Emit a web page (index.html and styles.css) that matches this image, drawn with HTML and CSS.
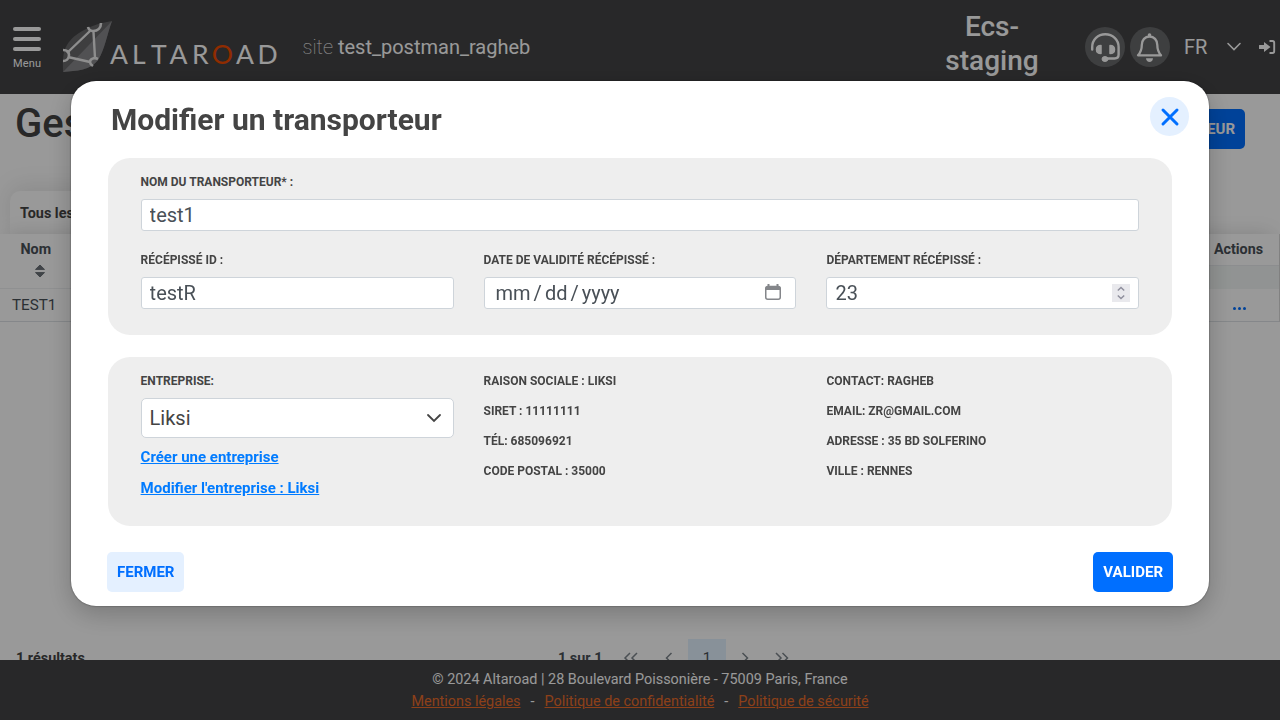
FILE: index.html
```html
<!DOCTYPE html>
<html lang="fr">
<head>
<meta charset="utf-8">
<title>Altaroad</title>
<link rel="stylesheet" href="styles.css">
</head>
<body>
<div class="app">
  <header class="header">
    <div class="menu"><i></i><i></i><i></i><span>Menu</span></div>
    <svg class="logo" width="218" height="54" viewBox="0 0 218 54">
      <path d="M50 1C30 4 12 13 5 25C0 33 1 43 1 52C14 51 29 50 36 40C43 29 45 14 50 1Z" fill="#68686a"/>
      <path d="M50 1L1 52C14 51 29 50 36 40C43 29 45 14 50 1Z" fill="#87878a"/>
      <path d="M28 11L5 33M31.500 12L33 38M6 37L28 42" fill="none" stroke="#ededed" stroke-width="2.4"/>
      <path d="M39 3C39 8 36 11 31 11Q27 11 26 7M1 30C5 30 7 32 7 35C7 39 4 41 1 41M36 39C32 37 28 39 28 42Q28 44 31 46" fill="none" stroke="#ededed" stroke-width="2.6"/>
      <text class="wordmark" x="48 70 89 107.500 130 149.700 174 195.500" y="43.500">ALTAR<tspan class="wordmark-o">O</tspan>AD</text>
    </svg>
    <div class="site"><span>site</span> test_postman_ragheb</div>
    <div class="env">Ecs-<br>staging</div>
    <div class="round">
      <svg width="40" height="40" viewBox="0 0 40 40" fill="none" stroke="#fff" stroke-width="2.4" stroke-linecap="round" stroke-linejoin="round"><path d="M7.2 22.5V20C7.2 12.500 13 7.200 20.300 7.200S33.600 12.500 33.600 20V27.500Q33.600 31.500 29.600 31.500H21"/><path d="M16 18.500V26.500C13.500 26.500 11.500 25 11.500 22.500S13.500 18.500 16 18.500ZM25 18.500V26.500C27.500 26.500 29.500 25 29.500 22.500S27.500 18.500 25 18.500Z" fill="#fff" stroke-width="1.500"/><ellipse cx="20" cy="32" rx="3" ry="2.500" fill="#fff" stroke-width="1"/></svg>
    </div>
    <div class="round">
      <svg width="40" height="40" viewBox="0 0 40 40"><path d="M8 28.300C11.500 24.500 11.800 22 11.800 18C11.800 13 15 9.500 19.500 9.500S27.300 13 27.300 18C27.300 22 27.600 24.500 31 28.300Z" fill="none" stroke="#fff" stroke-width="2.300" stroke-linejoin="round"/><circle cx="19.500" cy="8" r="1.800" fill="#fff"/><path d="M16 31.200H23Q22.500 35 19.500 35T16 31.200Z" fill="#fff"/></svg>
    </div>
    <div class="lang">FR</div>
    <svg class="chev" width="16" height="10" viewBox="0 0 16 10" fill="none" stroke="#fff" stroke-width="1.600" stroke-linecap="round"><path d="M2 1.500L8 7.500L14 1.500"/></svg>
    <svg class="exit" width="16" height="16" viewBox="0 0 16 16"><path d="M0 6.500Q0 6 .5 6H5V3L11.500 8L5 13V10H.5Q0 10 0 9.500Z" fill="#fff"/><path d="M10.500 2H13.500Q15.200 2 15.200 3.700V12.300Q15.200 14 13.500 14H10.500" fill="none" stroke="#fff" stroke-width="1.900"/></svg>
  </header>

  <main class="main">
    <div class="page-head"><h1>Gestion</h1><button class="create">CRÉER UN TRANSPORTEUR</button></div>
    <div class="tab">Tous les transporteurs</div>
    <div class="table">
      <div class="thead">
        <div class="th-name">Nom<svg width="10" height="14" viewBox="0 0 10 14"><path d="M5 1L9.500 5.400H.5ZM5 13L9.500 8.600H.5Z" fill="#6c7278" stroke="#6c7278" stroke-linejoin="round"/></svg></div>
        <div class="th-rest"><div class="th-actions">Actions</div><div class="filters"></div></div>
      </div>
      <div class="row"><span>TEST1</span><span class="dots"><i></i><i></i><i></i></span></div>
    </div>
    <div class="pager">
      <b class="results">1 résultats</b>
      <b class="count">1 sur 1</b>
      <svg class="pg" width="38" height="38" viewBox="0 0 38 38"><path d="M18 14L13 19L18 24M25 14L20 19L25 24"/></svg>
      <svg class="pg" width="38" height="38" viewBox="0 0 38 38"><path d="M21.500 14L16.500 19L21.500 24"/></svg>
      <span class="current">1</span>
      <svg class="pg" width="38" height="38" viewBox="0 0 38 38"><path d="M16.500 14L21.500 19L16.500 24"/></svg>
      <svg class="pg" width="38" height="38" viewBox="0 0 38 38"><path d="M12 14L17 19L12 24M18.500 14L23.500 19L18.500 24"/></svg>
    </div>
  </main>

  <footer class="footer">
    <div>© 2024 Altaroad | 28 Boulevard Poissonière - 75009 Paris, France</div>
    <div class="legal"><a>Mentions légales</a><span>-</span><a>Politique de confidentialité</a><span>-</span><a>Politique de sécurité</a></div>
  </footer>
</div>

<div class="overlay">
  <section class="modal">
    <div class="modal-head">
      <h2>Modifier un transporteur</h2>
      <button class="close"><svg width="18" height="18" viewBox="0 0 18 18" stroke="#006fff" stroke-width="3" stroke-linecap="round"><path d="M2 2L16 16M16 2L2 16"/></svg></button>
    </div>
    <div class="panel carrier">
      <label class="field wide"><span>NOM DU TRANSPORTEUR* :</span><input class="input" type="text" value="test1"></label>
      <label class="field"><span>RÉCÉPISSÉ ID :</span><input class="input" type="text" value="testR"></label>
      <div class="field"><span>DATE DE VALIDITÉ RÉCÉPISSÉ :</span>
        <div class="input date"><div class="date-parts"><b>mm</b><b>/</b><b>dd</b><b>/</b><b>yyyy</b></div>
          <svg width="16" height="16" viewBox="0 0 16 16"><path d="M3.500 -1V3M12.500 -1V3" stroke="#84868a" stroke-width="2"/><rect x=".75" y="1.500" width="14.500" height="12.700" rx="2" fill="none" stroke="#84868a" stroke-width="1.500"/><path d="M.75 2H15.250V5H.75Z" fill="#84868a"/></svg>
        </div>
      </div>
      <div class="field"><span>DÉPARTEMENT RÉCÉPISSÉ :</span>
        <div class="input number">23<svg width="18" height="18" viewBox="0 0 18 18"><rect width="18" height="18" fill="#e9e9ed"/><path d="M5.800 6.500L9 3.500L12.200 6.500M5.800 11.500L9 14.500L12.200 11.500" fill="none" stroke="#8f8f9d" stroke-width="1.500"/></svg></div>
      </div>
    </div>
    <div class="panel company">
      <div class="company-pick">
        <div class="field"><span>ENTREPRISE:</span><div class="input select">Liksi<svg width="16" height="10" viewBox="0 0 16 10" fill="none" stroke="#444" stroke-width="1.800" stroke-linecap="round"><path d="M2 2L8 8L14 2"/></svg></div></div>
        <a>Créer une entreprise</a>
        <a>Modifier l'entreprise : Liksi</a>
      </div>
      <div class="info"><p>RAISON SOCIALE : LIKSI</p><p>SIRET : 11111111</p><p>TÉL: 685096921</p><p>CODE POSTAL : 35000</p></div>
      <div class="info"><p>CONTACT: RAGHEB</p><p>EMAIL: ZR@GMAIL.COM</p><p>ADRESSE : 35 BD SOLFERINO</p><p>VILLE : RENNES</p></div>
    </div>
    <div class="actions"><button class="btn light">FERMER</button><button class="btn solid">VALIDER</button></div>
  </section>
</div>
</body>
</html>
```
FILE: styles.css
```css
* { box-sizing: border-box; }
body { margin: 0; font-family: Roboto, sans-serif; color: #444; overflow: hidden; }
h1, h2, p { margin: 0; }
button { border: 0; font-family: inherit; padding: 0; }
svg { overflow: visible; }
.app { height: 720px; display: flex; flex-direction: column; }

.header { flex: none; height: 94px; background: #434345; color: #fff; display: flex; align-items: center; }
.menu { width: 28px; margin-left: 13px; display: flex; flex-direction: column; gap: 6px; padding-top: 3px; }
.menu i { height: 4px; border-radius: 2px; background: #fff; }
.menu span { font-size: 11px; line-height: 13px; text-align: center; letter-spacing: .2px; }
.logo { margin-left: 21px; flex: none; }
.wordmark { font-family: Lato, sans-serif; font-size: 26.5px; fill: #fff; }
.wordmark-o { fill: #f04a00; }
.site { margin-left: 22.5px; font-size: 20px; width: 240.5px; white-space: nowrap; }
.site span { font-weight: 100; }
.env { width: 120px; margin-left: 389px; text-align: center; font-size: 28px; line-height: 34px; font-weight: 500; padding-bottom: 6px; }
.round { width: 40px; height: 40px; border-radius: 50%; background: #68696b; flex: none; margin-right: 5px; }
.env + .round { margin-left: 33px; }
.lang { font-size: 20px; margin-left: 9px; width: 24px; }
.chev { margin-left: 18px; flex: none; }
.exit { margin-left: 17px; flex: none; }

.main { flex: 1; min-height: 0; overflow: hidden; display: flex; flex-direction: column; background: #fff; }
.page-head { display: flex; justify-content: space-between; height: 97px; padding: 0 35px 0 15px; flex: none; }
.page-head h1 { font-size: 40px; line-height: 48px; font-weight: 500; padding-top: 6px; }
.create { height: 40px; margin-top: 15px; padding: 0 10px; border-radius: 5px; background: #006fff; color: #fff; font-size: 15px; font-weight: 700; }
.tab { position: relative; width: 190px; height: 43px; margin-left: 10px; padding: 14px 10px 0; background: #fff; border-radius: 10px 10px 0 0; font-size: 14.4px; line-height: 17px; font-weight: 700; flex: none; box-shadow: 0 -4px 25px rgba(0,0,0,.1); }
.table { position: relative; background: #fff; margin-right: 1px; height: 88px; flex: none; color: #495057; box-shadow: 0 -8px 18px -8px rgba(0,0,0,.15), 1px 0 #ddd; clip-path: inset(-40px -1px 0 0); }
.thead { display: flex; height: 55px; border-bottom: 1px solid #eef0f2; font-size: 14.3px; font-weight: 700; }
.th-name { width: 80px; padding: 7px 0 0 20.500px; line-height: 16px; display: flex; flex-direction: column; gap: 7px; }
.th-name svg { margin-left: 14px; }
.th-rest { flex: 1; }
.th-actions { height: 32px; border-bottom: 1px solid #e9ecef; text-align: right; padding: 7px 16px 0 0; line-height: 16px; }
.filters { height: 23px; background: #f2f6f5; }
.row { display: flex; justify-content: space-between; align-items: center; height: 33px; padding: 0 33px 0 12px; border-bottom: 1px solid #dee2e6; font-size: 15.2px; }
.dots { display: flex; gap: 2px; padding-top: 7px; }
.dots i { width: 3px; height: 3px; border-radius: 50%; background: #006fff; }
.pager { margin-top: 317px; flex: none; height: 38px; display: flex; align-items: center; padding-left: 16px; font-size: 14.4px; color: #6c757d; }
.results { width: 542px; color: #444; }
.count { width: 54px; color: #495057; }
.pg { fill: none; stroke: #7d858c; stroke-width: 1.5; }
.current { width: 38px; height: 38px; line-height: 38px; text-align: center; background: #e3f2ff; color: #495057; font-size: 15px; }

.footer { position: relative; flex: none; height: 60px; background: #434345; color: #fff; text-align: center; font-size: 14.4px; line-height: 22px; padding-top: 9px; }
.legal { display: flex; justify-content: center; gap: 10px; }
.legal a { color: #e96c2a; text-decoration: underline; }

.overlay { position: fixed; inset: 0; background: rgba(0,0,0,.4); padding: 81px 71px 0; }
.modal { height: 525px; background: #fff; border-radius: 25px; padding: 16px 37px 0; display: flex; flex-direction: column; box-shadow: 0 0 2px rgba(0,0,0,.5), 0 8px 26px rgba(0,0,0,.22); }
.modal-head { display: flex; justify-content: space-between; height: 61px; margin-right: -17px; padding-left: 3px; }
.modal-head h2 { font-size: 30px; line-height: 46px; font-weight: 700; }
.close { width: 39px; height: 39px; border-radius: 50%; background: #e4f0ff; display: flex; align-items: center; justify-content: center; padding: 1px 0 0 1px; }
.panel { background: #eee; border-radius: 22px; display: grid; grid-template-columns: repeat(3, 1fr); column-gap: 30px; padding: 0 32.6px; font-size: 12px; font-weight: 700; }
.carrier { height: 177px; padding-top: 15px; grid-template-rows: 78px 78px; }
.company { height: 169px; margin-top: 22px; padding-top: 15px; }
.field { display: flex; flex-direction: column; min-width: 0; }
.field > span { line-height: 18px; margin-bottom: 8px; }
.wide { grid-column: 1 / -1; }
.input { height: 32px; width: 100%; border: 1px solid #ced4da; border-radius: 3px; background: #fff; padding: 0 8px; font-family: inherit; font-size: 20px; font-weight: 400; color: #495057; display: flex; align-items: center; justify-content: space-between; }
.date { padding: 0 14px 0 11px; }
.date-parts { display: flex; gap: 3px; }
.date-parts b { font-weight: 400; }
.select { height: 40px; border-radius: 5px; padding-right: 11px; color: #444; }
.company-pick { display: flex; flex-direction: column; align-items: flex-start; }
.company-pick .field { width: 100%; }
.company-pick a { color: #007bff; text-decoration: underline; font-size: 15px; line-height: 18px; margin-top: 10px; }
.company-pick a + a { margin-top: 13px; }
.info { line-height: 18px; display: flex; flex-direction: column; gap: 12px; }
.actions { display: flex; justify-content: space-between; margin: 26px -1px 0; }
.btn { height: 40px; padding: 0 10px; border-radius: 5px; font-size: 15px; font-weight: 700; }
.light { background: #e4f0ff; color: #006fff; }
.solid { background: #006fff; color: #fff; }
```
